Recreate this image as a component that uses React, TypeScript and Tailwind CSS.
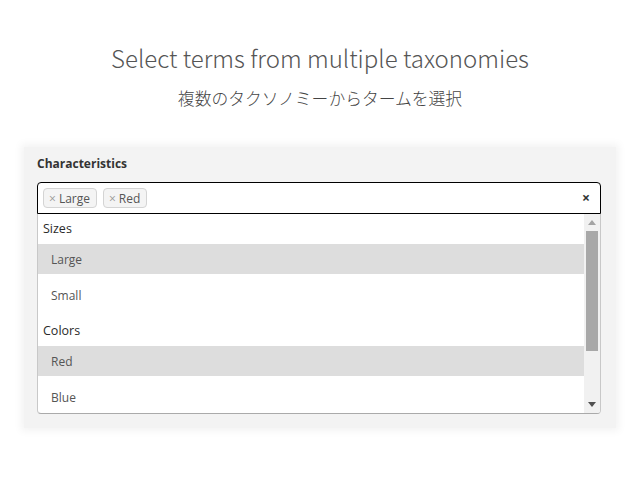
import React from "react";

const Option = ({ label, active }: { label: string; active?: boolean }) => (
  <div
    className={`h-[30px] mb-[6px] pl-[13px] pt-[1px] flex items-center text-[12px] text-[#555] ${
      active ? "bg-[#dddddd]" : ""
    }`}
  >
    {label}
  </div>
);

const Group = ({ label }: { label: string }) => (
  <div className="h-[30px] pl-[5px] pt-[1px] flex items-center text-[12.5px] text-[#2a2a2a] font-medium">
    {label}
  </div>
);

const Tag = ({ label }: { label: string }) => (
  <span className="h-[20px] pl-[5px] pr-[6px] pt-[1px] flex items-center gap-[3px] rounded-[4px] border border-[#d4d4d4] bg-[#f4f4f4] text-[12px] text-[#555]">
    <span className="text-[#999] text-[12px]">×</span>
    {label}
  </span>
);

export default function App() {
  return (
    <div
      className="w-[640px] h-[480px] bg-white overflow-hidden"
      style={{ fontFamily: '"Open Sans", "Noto Sans", sans-serif' }}
    >
      <div
        className="pt-[40px] text-center"
        style={{ fontFamily: '"Noto Sans CJK JP", "Noto Sans", sans-serif' }}
      >
        <div className="text-[24px] leading-[36px] font-extralight text-[#555]">
          Select terms from multiple taxonomies
        </div>
        <div className="mt-[10px] text-[16.8px] leading-[24px] font-extralight text-[#444]">
          複数のタクソノミーからタームを選択
        </div>
      </div>

      <div className="ml-[24px] w-[592px] mt-[37px] bg-[#f3f3f3] shadow-[0_0_8px_3px_#f3f3f3] pl-[13px] pt-[8px] pb-[14px]">
        <div className="text-[12px] leading-[18px] font-bold text-[#333]">Characteristics</div>
        <div className="mt-[9px] w-[564px]">
          <div className="h-[32px] border border-black rounded-t-[4px] bg-white flex items-center pl-[5px] pr-[10px] gap-[6px]">
            <Tag label="Large" />
            <Tag label="Red" />
            <span className="ml-auto text-[14px] font-bold text-[#333] leading-none">×</span>
          </div>
          <div className="h-[200px] bg-white border-x border-b border-x-[#c8c8c8] border-b-[#aaaaaa] rounded-b-[4px] flex overflow-hidden">
            <div className="flex-1 overflow-hidden">
              <Group label="Sizes" />
              <Option label="Large" active />
              <Option label="Small" />
              <Group label="Colors" />
              <Option label="Red" active />
              <Option label="Blue" />
            </div>
            <div className="w-[16px] bg-[#f1f1f1] flex flex-col items-center">
              <div className="h-[17px] flex items-center justify-center">
                <svg width="8" height="5" viewBox="0 0 8 5">
                  <polygon points="0,5 8,5 4,0" fill="#a3a3a3" />
                </svg>
              </div>
              <div className="w-[12px] h-[120px] bg-[#a8a8a8]" />
              <div className="flex-1" />
              <div className="h-[17px] flex items-center justify-center">
                <svg width="8" height="5" viewBox="0 0 8 5">
                  <polygon points="0,0 8,0 4,5" fill="#505050" />
                </svg>
              </div>
            </div>
          </div>
        </div>
      </div>
    </div>
  );
}
